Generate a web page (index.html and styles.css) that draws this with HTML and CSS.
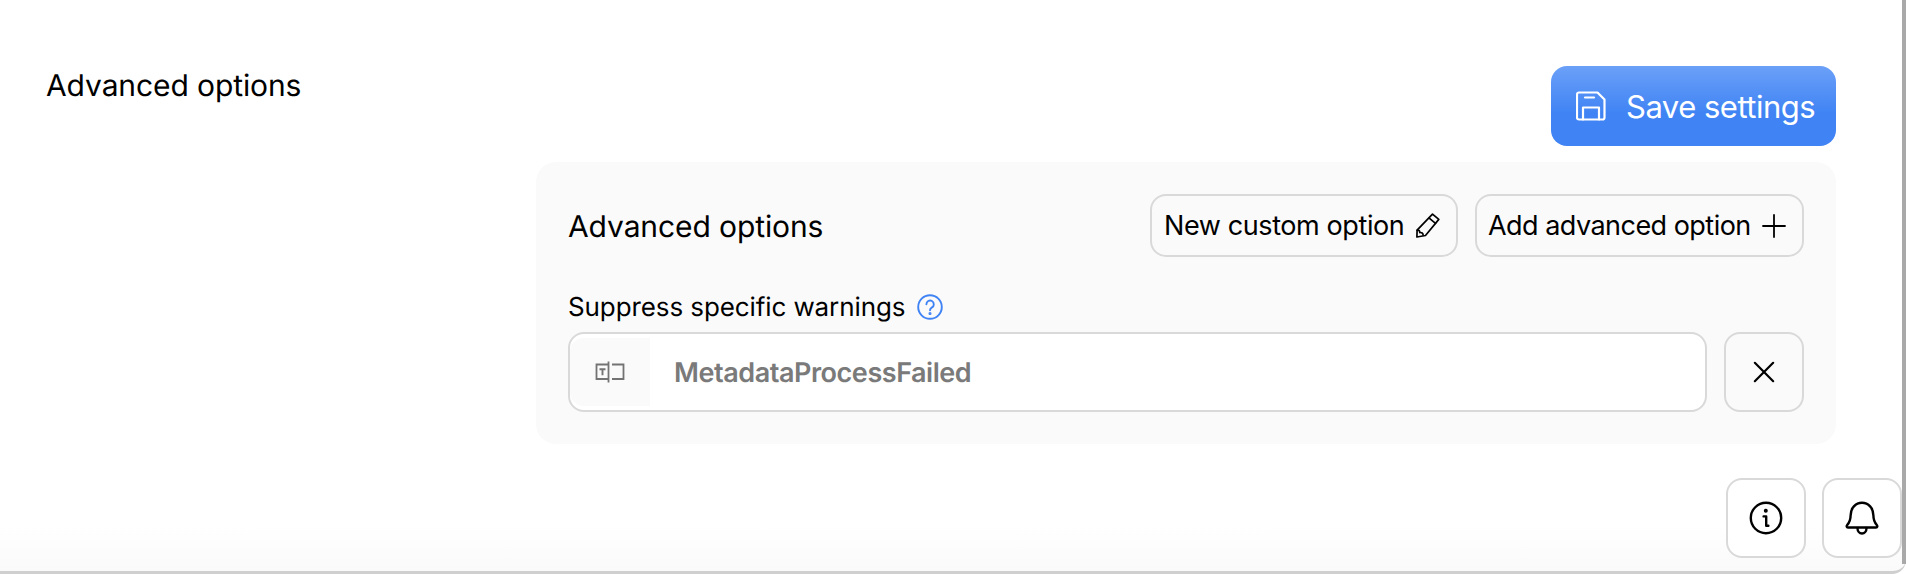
FILE: index.html
```html
<!DOCTYPE html>
<html lang="en">
<head>
    <meta charset="UTF-8">
    <meta name="viewport" content="width=device-width, initial-scale=1.0">
    <title>Advanced options</title>
    <link rel="stylesheet" href="styles.css">
</head>
<body>

    <div class="page">
        <h2 class="section-title">Advanced options</h2>

        <div class="section-body">
            <button class="save-btn">
                <svg class="save-icon" viewBox="0 0 30 30" fill="none" stroke="currentColor" stroke-width="2.2" stroke-linejoin="round" stroke-linecap="round">
                    <path d="M3 1.500h18.500l7 7v18a2 2 0 0 1-2 2H3a2 2 0 0 1-2-2v-23a2 2 0 0 1 2-2z"/>
                    <path d="M9 6.500h9"/>
                    <path d="M7 28.500V16.500h16v12"/>
                </svg>
                <span>Save settings</span>
            </button>

            <div class="panel">
                <div class="panel-head">
                    <h3 class="panel-title">Advanced options</h3>
                    <div class="panel-actions">
                        <button class="outline-btn new-btn">
                            New custom option
                            <svg class="pencil-icon" viewBox="0 0 25 25" fill="none" stroke="currentColor" stroke-width="1.700" stroke-linejoin="round" stroke-linecap="round">
                                <path d="M17.500 1.200l6.300 5.200L10.500 22.500l-8.600 1.500.2-6.800z"/>
                                <path d="M14.200 5.200l6.300 5.200"/>
                                <path d="M2.100 17.200c2-.6 2.600.8 2.700 2.400 1.800-.4 3.400.6 3.300 2.400"/>
                            </svg>
                        </button>
                        <button class="outline-btn add-btn">
                            Add advanced option
                            <svg class="plus-icon" viewBox="0 0 24 24" fill="none" stroke="currentColor" stroke-width="1.800" stroke-linecap="round">
                                <path d="M12 1v22M1 12h22"/>
                            </svg>
                        </button>
                    </div>
                </div>

                <div class="field-label">
                    <span>Suppress specific warnings</span>
                    <svg class="help-icon" viewBox="0 0 26 26" fill="none" stroke="currentColor" stroke-width="1.900" stroke-linecap="round">
                        <circle cx="13" cy="13" r="11.800"/>
                        <path d="M9.400 10.200a3.700 3.700 0 1 1 5.600 3.200c-1.300.8-2 1.500-2 2.900"/>
                        <circle cx="13" cy="19.500" r="0.600" fill="currentColor"/>
                    </svg>
                </div>

                <div class="field-row">
                    <div class="text-field">
                        <div class="field-addon">
                            <svg class="field-icon" viewBox="0 0 30 22" fill="none" stroke="currentColor" stroke-width="1.800">
                                <path d="M13 3.500H1.500v14.500H13"/>
                                <path d="M13.500 0.500v21"/>
                                <path d="M17 3.500h11.500v14.500H17"/>
                                <path d="M4.500 8.200h6M7.500 8.200v6" stroke-width="1.900"/>
                            </svg>
                        </div>
                        <span class="field-value">MetadataProcessFailed</span>
                    </div>
                    <button class="square-btn">
                        <svg class="x-icon" viewBox="0 0 24 24" fill="none" stroke="currentColor" stroke-width="2.400" stroke-linecap="round">
                            <path d="M2 2l20 20M22 2L2 22"/>
                        </svg>
                    </button>
                </div>
            </div>
        </div>

        <!-- Tombol mengambang di pojok -->
        <div class="float-actions">
            <button class="square-btn float-btn">
                <svg class="float-icon" viewBox="0 0 34 34" fill="none" stroke="currentColor" stroke-width="2.400" stroke-linecap="round" stroke-linejoin="round">
                    <circle cx="17" cy="17" r="15.200"/>
                    <path d="M14.600 15.400h2.600v9.400h2.200"/>
                    <circle cx="16.800" cy="9.800" r="0.800" fill="currentColor"/>
                </svg>
            </button>
            <button class="square-btn float-btn">
                <svg class="float-icon" viewBox="0 0 34 34" fill="none" stroke="currentColor" stroke-width="2.400" stroke-linecap="round" stroke-linejoin="round">
                    <path d="M3 26.500c-1.500 0-1.600-1.400-.8-2.400 2-2.400 3.400-4.400 3.400-9.600C5.600 7 10.600 1.800 17 1.800S28.400 7 28.400 14.500c0 5.200 1.400 7.200 3.400 9.600.8 1 .7 2.400-.8 2.400z"/>
                    <path d="M12.500 27c0 3.500 2 5.500 4.500 5.500s4.500-2 4.500-5.500"/>
                </svg>
            </button>
        </div>

        <div class="scroll-bar"></div>
    </div>

</body>
</html>
```

FILE: styles.css
```css
* {
    margin: 0;
    padding: 0;
    box-sizing: border-box;
}

html, body {
    height: 100%;
    background: #fff;
}

body {
    font-family: Inter, "Liberation Sans", sans-serif;
    color: #000;
    overflow: hidden;
    text-rendering: geometricPrecision;
}

button {
    font-family: inherit;
    color: inherit;
    cursor: pointer;
}

.page {
    position: relative;
    height: 574px;
    display: grid;
    grid-template-columns: 490px 1300px;
    align-items: start;
    padding: 66px 0 0 46px;
    border-bottom: 3px solid #cfcfcf;
    border-bottom-right-radius: 14px;
    background: linear-gradient(#fff 92%, #fafafa);
}

.scroll-bar {
    position: absolute;
    top: 0;
    right: 0;
    width: 4px;
    height: 564px;
    background: #a9a9a9;
}

.section-title {
    font-size: 30px;
    font-weight: 400;
    line-height: 40px;
    letter-spacing: -0.1px;
}

.section-body {
    display: flex;
    flex-direction: column;
    align-items: flex-end;
    gap: 16px;
}

.save-btn {
    display: flex;
    align-items: center;
    gap: 20px;
    width: 285px;
    height: 80px;
    padding: 0 0 0 25px;
    border: none;
    border-radius: 16px;
    background: linear-gradient(#6ba0f8, #3f83f4 60%);
    color: #fff;
    font-size: 31px;
    font-weight: 400;
    letter-spacing: -0.5px;
}

.save-icon {
    width: 30px;
    height: 30px;
}

.panel {
    width: 100%;
    height: 282px;
    padding: 32px;
    border-radius: 20px;
    background: #fafafa;
}

.panel-head {
    display: flex;
    justify-content: space-between;
    align-items: center;
    height: 63px;
}

.panel-title {
    padding-top: 2px;
    font-size: 30px;
    font-weight: 400;
    letter-spacing: -0.1px;
}

.panel-actions {
    display: flex;
    gap: 17px;
}

.outline-btn {
    display: flex;
    align-items: center;
    justify-content: space-between;
    height: 63px;
    padding: 0 16px 0 12px;
    border: 2px solid #d9d9d9;
    border-radius: 16px;
    background: #fafafa;
    font-size: 27px;
    font-weight: 400;
    letter-spacing: -0.4px;
}

.new-btn {
    width: 308px;
}

.add-btn {
    width: 329px;
    padding-left: 11px;
    letter-spacing: -0.53px;
}

.pencil-icon {
    width: 25px;
    height: 25px;
}

.plus-icon {
    width: 24px;
    height: 24px;
}

.field-label {
    display: flex;
    align-items: center;
    gap: 12px;
    height: 30px;
    margin-top: 35px;
    font-size: 26px;
    font-weight: 400;
    letter-spacing: -0.1px;
}

.help-icon {
    width: 26px;
    height: 26px;
    color: #3f83f4;
}

.field-row {
    display: flex;
    gap: 17px;
    margin-top: 10px;
}

.text-field {
    flex: 1;
    display: flex;
    align-items: center;
    gap: 24px;
    height: 80px;
    border: 2px solid #d9d9d9;
    border-radius: 16px;
    background: #fff;
}

.field-addon {
    display: flex;
    align-items: center;
    justify-content: center;
    width: 80px;
    height: 68px;
    border-radius: 14px 0 0 14px;
    background: #fafafa;
    color: #737373;
}

.field-icon {
    width: 30px;
    height: 22px;
}

.field-value {
    font-size: 27px;
    font-weight: 600;
    letter-spacing: -0.45px;
    color: #7a7a7a;
}

.square-btn {
    display: flex;
    align-items: center;
    justify-content: center;
    width: 80px;
    height: 80px;
    border: 2px solid #d9d9d9;
    border-radius: 16px;
    background: #fafafa;
}

.x-icon {
    width: 22px;
    height: 22px;
}

.float-actions {
    position: absolute;
    top: 478px;
    right: 4px;
    display: flex;
    gap: 16px;
}

.float-btn {
    background: #fff;
}

.float-icon {
    width: 34px;
    height: 34px;
}
```
